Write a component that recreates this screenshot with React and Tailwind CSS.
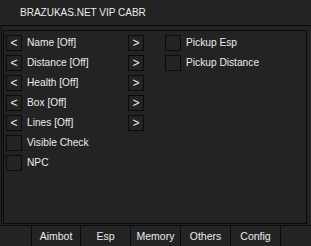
import React from "react";

const font = { fontFamily: '"Liberation Sans", Arial, sans-serif' };

function Arrow({ ch }) {
  return (
    <div className="w-[16px] h-[16px] border border-[#0b0b0b] flex items-center justify-center text-[12px] leading-none text-[#ececec] pb-[1px]">
      {ch}
    </div>
  );
}

function Box() {
  return <div className="w-[16px] h-[16px] border border-[#0b0b0b] shrink-0" />;
}

function OptRow({ label }) {
  return (
    <div className="flex items-center h-[16px]">
      <Arrow ch="<" />
      <div className="flex-1 ml-[5px] text-[10.2px] leading-none text-[#ececec]">{label}</div>
      <Arrow ch=">" />
    </div>
  );
}

function CheckRow({ label }) {
  return (
    <div className="flex items-center h-[16px]">
      <Box />
      <div className="ml-[5px] text-[10.2px] leading-none text-[#ececec]">{label}</div>
    </div>
  );
}

export default function App() {
  const tabs = [
    { t: "Aimbot", c: "w-[50px] border-l border-r border-[#0b0b0b]" },
    { t: "Esp", c: "w-[49px]" },
    { t: "Memory", c: "w-[50px] border-l border-[#0b0b0b]" },
    { t: "Others", c: "w-[50px] border-l border-[#0b0b0b]" },
    { t: "Config", c: "w-[51px] border-l border-r border-[#0b0b0b]" },
  ];
  return (
    <div className="w-[311px] h-[246px] bg-[#232323] flex flex-col overflow-hidden" style={font}>
      <div className="h-[26px] border-b border-[#0b0b0b] flex items-center pl-[20px] text-[10px] text-[#ececec] leading-none">
        BRAZUKAS.NET VIP CABR
      </div>
      <div className="h-[199px] ml-[1px] border-l border-[#0b0b0b] pl-[1px] pt-[4px] pb-[1px] flex">
        <div className="w-[304px] h-[194px] border border-[#0b0b0b] pt-[4px] pl-[2px] flex">
          <div className="w-[138px] flex flex-col gap-[4px]">
            <OptRow label="Name [Off]" />
            <OptRow label="Distance [Off]" />
            <OptRow label="Health [Off]" />
            <OptRow label="Box [Off]" />
            <OptRow label="Lines [Off]" />
            <CheckRow label="Visible Check" />
            <CheckRow label="NPC" />
          </div>
          <div className="ml-[21px] flex flex-col gap-[4px]">
            <CheckRow label="Pickup Esp" />
            <CheckRow label="Pickup Distance" />
          </div>
        </div>
      </div>
      <div className="h-[21px] border-t border-[#0b0b0b] flex text-[10.5px] text-[#ececec] leading-none">
        <div className="w-[31px]" />
        {tabs.map((x) => (
          <div key={x.t} className={`h-full flex items-center justify-center ${x.c}`}>
            {x.t}
          </div>
        ))}
      </div>
    </div>
  );
}
